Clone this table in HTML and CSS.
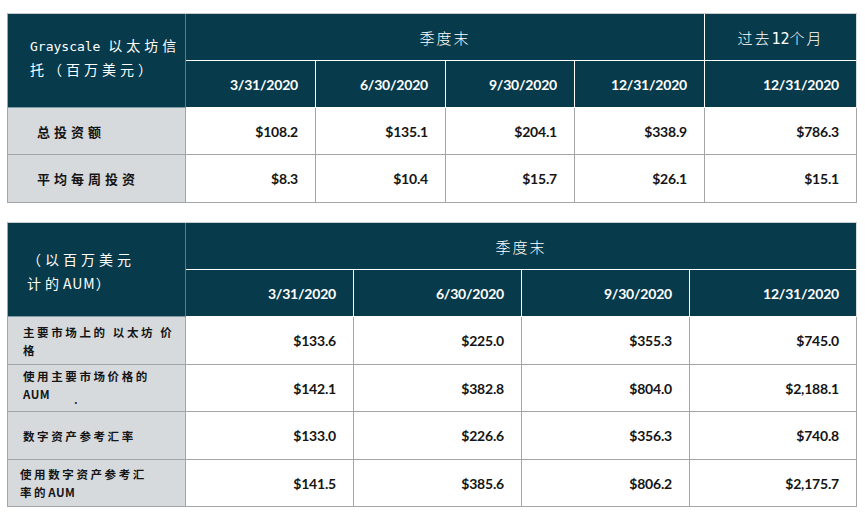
FILE: index.html
```html
<!DOCTYPE html>
<html lang="zh">
<head>
<meta charset="utf-8">
<link rel="stylesheet" href="styles.css">
</head>
<body>
<div class="page">
  <table class="tbl t1">
    <colgroup>
      <col class="c-label1"><col class="c130"><col class="c130"><col class="c129"><col class="c130"><col class="c151">
    </colgroup>
    <tr class="hr1">
      <th class="corner corner1" rowspan="2"><span class="lat">Grayscale </span><span class="cjk">以太坊信</span><br><span class="cjk">托（百万美元）</span></th>
      <th class="group" colspan="4"><span class="serif">季度末</span></th>
      <th class="group"><span class="serif">过去<span class="lat2">12</span>个月</span></th>
    </tr>
    <tr class="hr2">
      <th class="date">3/31/2020</th>
      <th class="date">6/30/2020</th>
      <th class="date">9/30/2020</th>
      <th class="date">12/31/2020</th>
      <th class="date">12/31/2020</th>
    </tr>
    <tr class="br1">
      <td class="label label1">总投资额</td>
      <td class="num">$108.2</td>
      <td class="num">$135.1</td>
      <td class="num">$204.1</td>
      <td class="num">$338.9</td>
      <td class="num">$786.3</td>
    </tr>
    <tr class="br2">
      <td class="label label1">平均每周投资</td>
      <td class="num">$8.3</td>
      <td class="num">$10.4</td>
      <td class="num">$15.7</td>
      <td class="num">$26.1</td>
      <td class="num">$15.1</td>
    </tr>
  </table>

  <table class="tbl t2">
    <colgroup>
      <col class="c-label1"><col class="c168"><col class="c168"><col class="c168"><col class="c166">
    </colgroup>
    <tr class="hr1">
      <th class="corner corner2" rowspan="2"><span class="cjk">（以百万美元</span><br><span class="cjk">计的<span class="aum">AUM</span>）</span></th>
      <th class="group" colspan="4"><span class="serif">季度末</span></th>
    </tr>
    <tr class="hr2">
      <th class="date">3/31/2020</th>
      <th class="date">6/30/2020</th>
      <th class="date">9/30/2020</th>
      <th class="date">12/31/2020</th>
    </tr>
    <tr class="br2">
      <td class="label label2">主要市场上的 以太坊 价<br>格</td>
      <td class="num">$133.6</td>
      <td class="num">$225.0</td>
      <td class="num">$355.3</td>
      <td class="num">$745.0</td>
    </tr>
    <tr class="br1">
      <td class="label label2">使用主要市场价格的<br><span class="aum">AUM</span><span class="dot">.</span></td>
      <td class="num">$142.1</td>
      <td class="num">$382.8</td>
      <td class="num">$804.0</td>
      <td class="num">$2,188.1</td>
    </tr>
    <tr class="br2">
      <td class="label label2">数字资产参考汇率</td>
      <td class="num">$133.0</td>
      <td class="num">$226.6</td>
      <td class="num">$356.3</td>
      <td class="num">$740.8</td>
    </tr>
    <tr class="br1">
      <td class="label label2 l2x">使用数字资产参考汇<br>率的<span class="aum">AUM</span></td>
      <td class="num">$141.5</td>
      <td class="num">$385.6</td>
      <td class="num">$806.2</td>
      <td class="num">$2,175.7</td>
    </tr>
  </table>
</div>
</body>
</html>
```

FILE: styles.css
```css
html, body {
  margin: 0;
  padding: 0;
  background: #ffffff;
}

.page {
  padding: 13px 0 0 7px;
  display: flex;
  flex-direction: column;
  gap: 19px;
  align-items: flex-start;
}

.tbl {
  border-collapse: separate;
  border-spacing: 0;
  table-layout: fixed;
  width: 849px;
  border-left: 1px solid #a3a5a7;
  border-top: 1px solid #c9cccf;
}

.c-label1 { width: 178px; }
.c130 { width: 130px; }
.c129 { width: 129px; }
.c151 { width: 152px; }
.c168 { width: 168px; }
.c166 { width: 167px; }

.tbl th,
.tbl td {
  padding: 0;
  box-sizing: border-box;
}

.tbl th {
  background: #073a4b;
  color: #ffffff;
  font-weight: normal;
  border-right: 1px solid #ffffff;
  border-bottom: 1px solid #ffffff;
}

.tbl th:last-child {
  border-right: 1px solid #d8dde0;
}

.tbl td {
  border-right: 1px solid #a3a5a7;
  border-bottom: 1px solid #a3a5a7;
  color: #151515;
}

.hr1 { height: 47px; }
.hr2 { height: 47px; }
.br1 { height: 47px; }
.br2 { height: 48px; }

.tbl .corner {
  text-align: left;
  vertical-align: middle;
  border-right: 1px solid #5c7b88;
  border-bottom: 1px solid #7f9aa4;
  font-size: 14px;
  line-height: 23px;
}

.tbl .corner1 {
  padding: 0 0 6px 22px;
}

.tbl .corner2 {
  padding: 5px 0 0 19px;
}

.lat {
  font-family: "DejaVu Sans Mono", "Liberation Mono", monospace;
  font-size: 13px;
}

.cjk {
  font-family: "Noto Sans CJK SC", sans-serif;
  font-size: 14px;
  letter-spacing: 4px;
}

.cjk .aum {
  letter-spacing: 1px;
}

.group {
  text-align: center;
  vertical-align: middle;
}

.serif {
  font-family: "Noto Sans CJK SC", sans-serif;
  font-size: 15px;
  font-weight: 300;
  letter-spacing: 2px;
}

.lat2 {
  font-family: "DejaVu Sans Mono", monospace;
  font-size: 15px;
  letter-spacing: 0;
}

.tbl .date {
  text-align: right;
  padding-right: 17px;
  font-family: Lato, "Liberation Sans", sans-serif;
  font-weight: 700;
  font-size: 14px;
  letter-spacing: -0.2px;
}

.tbl .num {
  text-align: right;
  padding-right: 17px;
  font-family: Lato, "Liberation Sans", sans-serif;
  font-weight: 700;
  font-size: 14px;
  letter-spacing: -0.2px;
  background: #ffffff;
}

.label {
  background: #d7dadd;
  font-family: "Noto Sans CJK SC", sans-serif;
  font-weight: 700;
  vertical-align: middle;
}

.tbl .label1 {
  font-size: 13px;
  letter-spacing: 4px;
  padding-left: 29px;
}

.tbl .label2 {
  font-size: 11.5px;
  line-height: 18px;
  letter-spacing: 2.6px;
  padding-left: 15px;
}

.tbl .l2x {
  padding-left: 12px;
}

.label2 .aum {
  letter-spacing: 0.5px;
}

.dot {
  display: inline-block;
  margin-left: 24px;
  font-size: 10px;
  vertical-align: -5px;
}
```
